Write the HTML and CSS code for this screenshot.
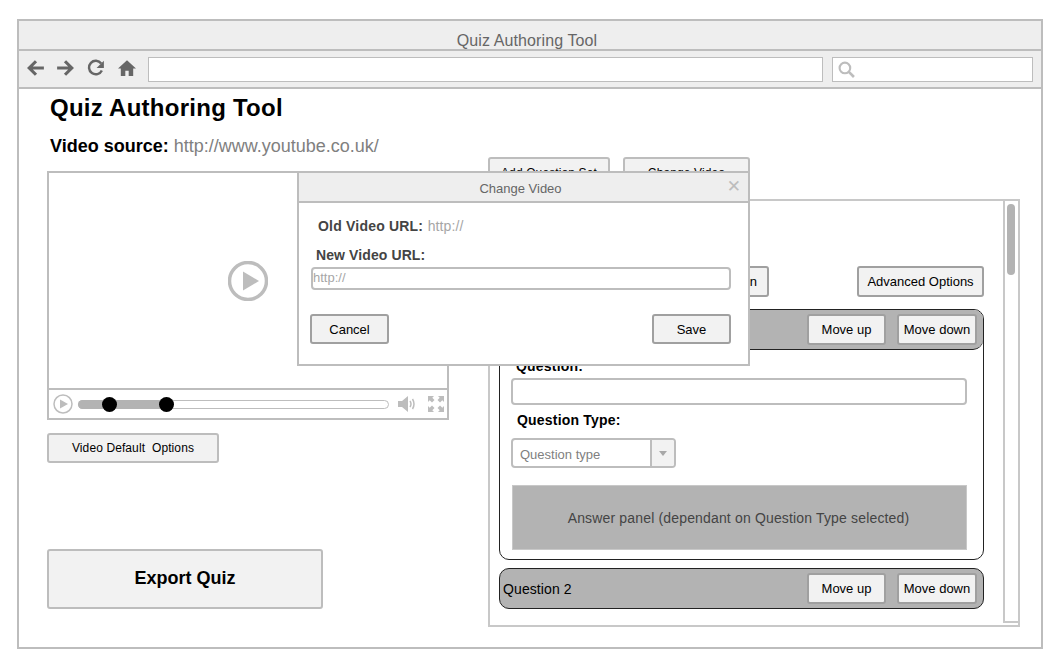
FILE: index.html
```html
<!DOCTYPE html>
<html lang="en">
<head>
<meta charset="utf-8">
<title>Quiz Authoring Tool</title>
<link rel="stylesheet" href="styles.css">
</head>
<body>
<div class="frame">
  <div class="titlebar">Quiz Authoring Tool</div>
  <div class="toolbar">
    <div class="navicons">
      <svg class="navicon navicon-back" viewBox="0 0 16 16"><path d="M8 2 2 8l6 6M2.5 8H15" fill="none" stroke="#666" stroke-width="2.8"/></svg>
      <svg class="navicon" viewBox="0 0 16 16"><path d="M8 2l6 6-6 6M13.5 8H1" fill="none" stroke="#666" stroke-width="2.8"/></svg>
      <svg class="navicon" viewBox="0 0 16 16"><path d="M13.2 10.2A6 6 0 1 1 12.6 4" fill="none" stroke="#666" stroke-width="2.2"/><path d="M15 1.5V8H8.5z" fill="#666"/></svg>
      <svg class="navicon" viewBox="0 0 16 16"><path d="M8 1 0 8.5h2.500V15h4v-4.500h3V15h4V8.500H16z" fill="#666"/></svg>
    </div>
    <div class="address"></div>
    <div class="search">
      <svg class="searchicon" viewBox="0 0 16 16"><circle cx="6.500" cy="6.500" r="5" fill="none" stroke="#bdbdbd" stroke-width="2"/><path d="M10 10l5 5" stroke="#bdbdbd" stroke-width="2.500"/></svg>
    </div>
  </div>
  <div class="content">
    <div class="left">
      <h1 class="heading">Quiz Authoring Tool</h1>
      <p class="source"><b class="source-label">Video source:</b> <span class="source-url">http://www.youtube.co.uk/</span></p>
      <div class="player">
        <div class="screen">
          <svg class="bigplay" viewBox="0 0 40 40"><circle cx="20" cy="20" r="18.500" fill="none" stroke="#bdbdbd" stroke-width="3.500"/><path d="M15 10.500 31 20 15 29.500z" fill="#bdbdbd"/></svg>
        </div>
        <div class="controls">
          <svg class="smallplay" viewBox="0 0 20 20"><circle cx="10" cy="10" r="9" fill="none" stroke="#bdbdbd" stroke-width="1.500"/><path d="M7 5.500 15 10l-8 4.500z" fill="#bdbdbd"/></svg>
          <div class="track">
            <div class="track-fill"></div>
            <span class="knob knob-a"></span>
            <span class="knob knob-b"></span>
          </div>
          <svg class="volume" viewBox="0 0 18 18"><path d="M0 6h4l6-5v16l-6-5H0z" fill="#bdbdbd"/><path d="M12 6q2 3 0 6M14.500 4q3 5 0 10" fill="none" stroke="#bdbdbd" stroke-width="1.500"/></svg>
          <svg class="fullscreen" viewBox="0 0 16 16"><path d="M0 0h6L4.300 1.700 6.500 4 4 6.500 1.700 4.300 0 6zM16 0v6l-1.700-1.700L12 6.500 9.500 4l2.200-2.300L10 0zM0 16v-6l1.700 1.700L4 9.500 6.500 12l-2.200 2.300L6 16zM16 16h-6l1.700-1.700L9.500 12l2.500-2.500 2.300 2.200L16 10z" fill="#bdbdbd"/></svg>
        </div>
      </div>
      <button class="btn btn-light video-options">Video Default&nbsp; Options</button>
      <button class="btn btn-light export">Export Quiz</button>
    </div>
    <div class="right">
      <div class="top-actions">
        <button class="btn btn-light top-btn add-set">Add Question Set</button>
        <button class="btn btn-light top-btn change">Change Video</button>
      </div>
      <div class="panel">
        <div class="panel-main">
          <div class="panel-actions">
            <button class="btn btn-dark add-question">Add New Question</button>
            <button class="btn btn-dark advanced">Advanced Options</button>
          </div>
          <div class="card">
            <div class="card-head">
              <span class="card-title">Question 1</span>
              <button class="btn btn-dark move-up">Move up</button>
              <button class="btn btn-dark move-down">Move down</button>
            </div>
            <div class="card-body">
              <div class="label label-question">Question:</div>
              <div class="text-input"></div>
              <div class="label label-type">Question Type:</div>
              <div class="select">
                <span class="select-text">Question type</span>
                <span class="select-arrow"><i class="caret"></i></span>
              </div>
              <div class="answer">Answer panel (dependant on Question Type selected)</div>
            </div>
          </div>
          <div class="card-head card-closed">
            <span class="card-title">Question 2</span>
            <button class="btn btn-dark move-up">Move up</button>
            <button class="btn btn-dark move-down">Move down</button>
          </div>
        </div>
        <div class="scrollbar"><div class="thumb"></div></div>
      </div>
    </div>
  </div>
  <div class="dialog">
    <div class="dialog-title">Change Video<span class="close">✕</span></div>
    <div class="dialog-body">
      <div class="old-url"><b class="dlg-label label-old">Old Video URL:</b> <span class="muted">http://</span></div>
      <div class="new-url"><b class="dlg-label">New Video URL:</b></div>
      <div class="url-input">http://</div>
      <div class="dialog-actions">
        <button class="btn btn-dark dlg-btn">Cancel</button>
        <button class="btn btn-dark dlg-btn">Save</button>
      </div>
    </div>
  </div>
</div>
</body>
</html>
```
FILE: styles.css
```css
* { box-sizing: border-box; }
html, body { margin: 0; height: 100%; }
body {
  padding: 19px 0 0 17px;
  background: #fff;
  font-family: "Liberation Sans", Arial, sans-serif;
  color: #000;
  overflow: hidden;
}
.frame {
  position: relative;
  width: 1026px;
  height: 630px;
  border: 2px solid #bdbdbd;
  display: flex;
  flex-direction: column;
}
.titlebar {
  height: 30px;
  flex: none;
  padding-top: 11px;
  background: #eee;
  border-bottom: 2px solid #bdbdbd;
  color: #666;
  font-size: 16px;
  letter-spacing: .1px;
  line-height: 18px;
  text-align: center;
  padding-right: 6px;
}
.toolbar {
  height: 38px;
  flex: none;
  display: flex;
  align-items: center;
  background: #eee;
  border-bottom: 2px solid #bdbdbd;
  padding: 1px 8px 1px 8px;
}
.navicons { display: flex; gap: 13px; width: 121px; flex: none; padding-bottom: 2px; }
.navicon { width: 18px; height: 18px; flex: none; }
.navicon-back { margin-right: -2px; }
.address { width: 675px; height: 25px; background: #fff; border: 1px solid #bdbdbd; flex: none; }
.search {
  width: 201px; height: 25px; margin-left: 9px; background: #fff;
  border: 1px solid #bdbdbd; flex: none; display: flex; align-items: center; padding-left: 5px;
}
.searchicon { width: 17px; height: 17px; }
.content { flex: 1; display: flex; padding-left: 28px; }
.left { width: 402px; flex: none; display: flex; flex-direction: column; align-items: flex-start; }
.heading { margin: 0; padding-left: 3px; font-size: 24px; letter-spacing: .26px; line-height: 38px; font-weight: bold; }
.source { margin: 7px 0 0; padding-left: 3px; font-size: 18px; line-height: 24px; }
.source-url { color: #808080; }
.player {
  width: 402px; height: 249px; margin-top: 13px; border: 2px solid #bdbdbd;
  display: flex; flex-direction: column;
}
.screen { flex: 1; display: flex; align-items: center; justify-content: center; padding-bottom: 1px; }
.bigplay { width: 40px; height: 40px; margin-top: 1px; }
.controls {
  height: 30px; flex: none; border-top: 2px solid #bdbdbd; display: flex; align-items: center;
  padding-left: 4px;
}
.smallplay { width: 20px; height: 20px; flex: none; }
.track {
  position: relative; width: 311px; height: 9px; margin-left: 5px; flex: none;
  border: 1px solid #bdbdbd; border-radius: 5px;
}
.track-fill { width: 88px; height: 9px; margin: -1px; background: #b3b3b3; border-radius: 5px 0 0 5px; }
.knob { position: absolute; top: -4px; width: 15px; height: 15px; border-radius: 50%; background: #000; }
.knob-a { left: 23px; }
.knob-b { left: 80px; }
.volume { width: 18px; height: 18px; margin-left: 9px; flex: none; }
.fullscreen { width: 16px; height: 16px; margin-left: 12px; flex: none; }
.btn {
  font-family: inherit; background: #f2f2f2; color: #000; border-radius: 3px; padding: 0;
  font-size: 13px; text-align: center; cursor: default;
}
.btn-light { border: 2px solid #bdbdbd; }
.btn-dark { border: 2px solid #a0a0a0; }
.video-options { width: 172px; height: 30px; margin-top: 13px; font-size: 12px; letter-spacing: .1px; }
.export { width: 276px; height: 60px; margin-top: 86px; padding-bottom: 2px; font-size: 18px; font-weight: bold; }
.right { width: 532px; flex: none; margin-left: 39px; padding-top: 68px; display: flex; flex-direction: column; }
.top-actions { display: flex; gap: 13px; height: 42px; align-items: flex-start; }
.top-btn { height: 30px; padding-top: 2px; font-size: 12px; letter-spacing: .12px; }
.add-set { width: 122px; }
.change { width: 127px; }
.panel {
  width: 532px; height: 428px; border: 2px solid #c8c8c8; display: flex;
}
.panel-main { flex: 1; padding: 65px 19px 0 9px; min-width: 0; }
.panel-actions { display: flex; justify-content: flex-end; gap: 88px; height: 31px; margin-bottom: 12px; }
.add-question { padding: 0 10px; height: 31px; }
.advanced { width: 127px; height: 31px; }
.card { border: 1px solid #222; border-radius: 10px; height: 251px; overflow: hidden; }
.card-head {
  height: 40px; display: flex; align-items: center; background: #b3b3b3;
  padding: 0 6px 0 3px; border-bottom: 1px solid #222; border-radius: 0 0 10px 10px;
}
.card-closed { height: 41px; margin-top: 8px; border: 1px solid #222; border-radius: 10px; }
.card-title { flex: 1; font-size: 14px; letter-spacing: .1px; }
.move-up { width: 79px; height: 31px; margin-right: 11px; }
.move-down { width: 80px; height: 31px; }
.card-body { padding: 8px 16px 0 11px; display: flex; flex-direction: column; align-items: flex-start; }
.label { font-size: 14px; font-weight: bold; line-height: 16px; letter-spacing: .2px; }
.label-question { padding-left: 5px; margin-bottom: 4px; }
.text-input { width: 456px; height: 27px; border: 2px solid #bdbdbd; border-radius: 4px; background: #fff; }
.label-type { padding-left: 6px; margin-top: 7px; }
.select {
  width: 165px; height: 30px; margin-top: 10px; border: 2px solid #bdbdbd; border-radius: 4px;
  display: flex; align-items: center; overflow: hidden;
}
.select-text { flex: 1; padding: 3px 0 0 7px; font-size: 13px; color: #808080; }
.select-arrow {
  width: 24px; height: 100%; background: #f2f2f2; border-left: 2px solid #bdbdbd;
  display: flex; align-items: center; justify-content: center;
}
.caret { width: 0; height: 0; border: 4px solid transparent; border-top: 5px solid #a8a8a8; border-bottom: 0; }
.answer {
  width: 455px; height: 65px; margin: 17px 0 0 1px; padding-right: 2px; background: #b3b3b3; border: 1px solid #c8c8c8;
  display: flex; align-items: center; justify-content: center; font-size: 14px; letter-spacing: .16px; color: #444;
}
.scrollbar { width: 15px; height: 422px; flex: none; border-left: 2px solid #c8c8c8; border-bottom: 2px solid #c8c8c8; padding: 3px 0 0 2px; }
.thumb { width: 8px; height: 71px; background: #b3b3b3; border-radius: 4px; }
.dialog {
  position: absolute; left: 278px; top: 150px; width: 453px; height: 195px;
  border: 2px solid #bdbdbd; background: #fff;
}
.dialog-title {
  position: relative; height: 30px; background: #eee; border-bottom: 2px solid #bdbdbd;
  text-align: center; color: #666; font-size: 13px; line-height: 31px; padding-right: 6px;
}
.close { position: absolute; right: 7px; top: -2px; color: #bdbdbd; font-size: 17px; font-family: "DejaVu Sans", sans-serif; }
.dialog-body { padding: 14px 17px 0 11px; }
.dlg-label { color: #444; font-size: 14px; letter-spacing: .1px; }
.label-old { letter-spacing: .2px; }
.muted { color: #a6a6a6; font-size: 14px; letter-spacing: .1px; }
.old-url { padding-left: 8px; line-height: 18px; }
.new-url { padding-left: 6px; line-height: 18px; margin-top: 11px; }
.url-input {
  width: 420px; height: 23px; margin: 3px 0 0 1px; border: 2px solid #bdbdbd; border-radius: 4px;
  font-size: 13px; color: #a6a6a6; line-height: 18px;
}
.dialog-actions { display: flex; justify-content: space-between; margin-top: 24px; }
.dlg-btn { width: 79px; height: 30px; }
```
